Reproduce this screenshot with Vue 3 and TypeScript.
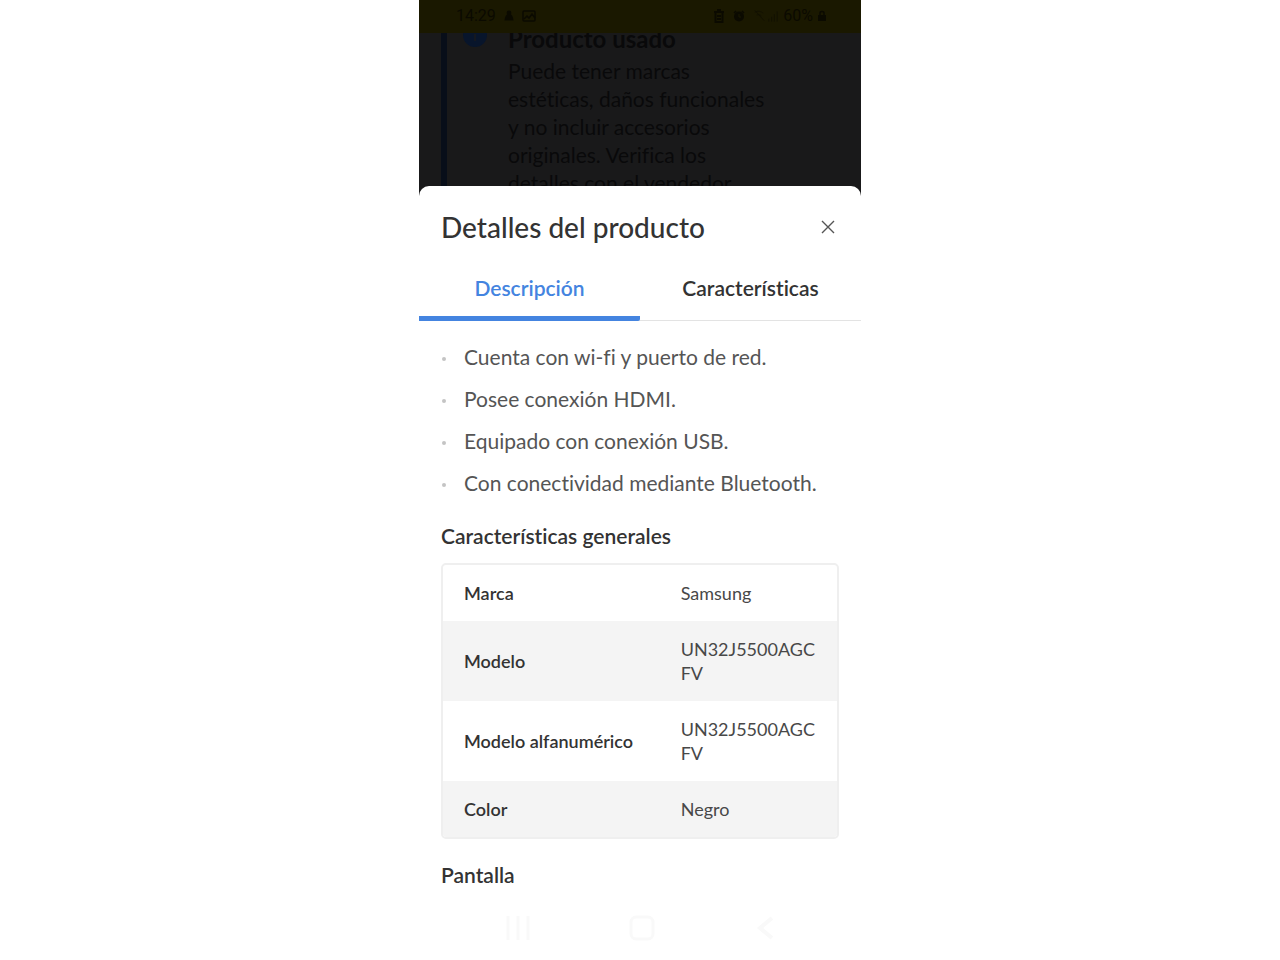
<script setup lang="ts">
import { ref } from 'vue'

interface Spec {
  name: string
  value: string
}

const tabs: string[] = ['Descripción', 'Características']
const activeTab = ref<string>('Descripción')

const features: string[] = [
  'Cuenta con wi-fi y puerto de red.',
  'Posee conexión HDMI.',
  'Equipado con conexión USB.',
  'Con conectividad mediante Bluetooth.',
]

const specs: Spec[] = [
  { name: 'Marca', value: 'Samsung' },
  { name: 'Modelo', value: 'UN32J5500AGCFV' },
  { name: 'Modelo alfanumérico', value: 'UN32J5500AGCFV' },
  { name: 'Color', value: 'Negro' },
]
</script>

<template>
  <div class="phone">
    <header class="status">
      <div class="status-group">
        <span>14:29</span>
        <svg width="10" height="12" viewBox="0 0 10 12" fill="currentColor" aria-hidden="true">
          <circle cx="5" cy="3" r="2.4" />
          <path d="M5 4c3 0 4 2.5 4.500 6.500h-9C1 6.500 2 4 5 4z" />
        </svg>
        <svg width="14" height="12" viewBox="0 0 14 12" fill="none" stroke="currentColor" stroke-width="1.500" aria-hidden="true">
          <rect x="1" y="1" width="12" height="10" rx="1" />
          <path d="M2 9l3-3 2 2 3-4 3 4" />
        </svg>
      </div>
      <div class="status-group status-right">
        <svg width="12" height="14" viewBox="0 0 12 14" fill="none" stroke="currentColor" stroke-width="2" aria-hidden="true">
          <path d="M1 3h10M4 1h4M2.500 3v10h7V3M4 7h4M4 10h4" />
        </svg>
        <svg class="alarm" width="12" height="12" viewBox="0 0 12 12" aria-hidden="true">
          <path d="M1 3l2-2M11 3L9 1" stroke="currentColor" stroke-width="1.500" />
          <circle cx="6" cy="6.500" r="5" fill="currentColor" />
          <path d="M6 4v3h2" fill="none" stroke="#1a1800" />
        </svg>
        <svg class="dim" width="26" height="14" viewBox="0 0 28 14" fill="none" stroke="currentColor" aria-hidden="true">
          <path d="M2 3c3-2 7-1 9 1M4 6c2-1 4 0 5 1M2 1l10 11M17 13v-3M20 13V8M23 13V5M26 13V2" />
        </svg>
        <span>60%</span>
        <svg width="10" height="12" viewBox="0 0 10 12" fill="currentColor" aria-hidden="true">
          <path d="M1 5h8v6H1z" />
          <path d="M3 5V3c0-2 4-2 4 0v2" fill="none" stroke="currentColor" stroke-width="1.500" />
        </svg>
      </div>
    </header>

    <section class="backdrop">
      <div class="notice">
        <svg class="info" width="24" height="24" viewBox="0 0 24 24" aria-hidden="true">
          <circle cx="12" cy="10" r="12" fill="#08152b" />
          <path d="M12 5v2M12 9v7" stroke="#141820" stroke-width="2" />
        </svg>
        <div>
          <h2>Producto usado</h2>
          <p>
            Puede tener marcas<br />estéticas, daños funcionales<br />y no incluir accesorios<br />originales.
            Verifica los<br />detalles con el vendedor
          </p>
        </div>
      </div>
    </section>

    <main class="sheet">
      <div class="sheet-head">
        <h1>Detalles del producto</h1>
        <button class="close" type="button" aria-label="Cerrar">
          <svg width="14" height="14" viewBox="0 0 14 14" fill="none" stroke="#555" stroke-width="1.400">
            <path d="M1 1l12 12M13 1L1 13" />
          </svg>
        </button>
      </div>

      <div class="tabs" role="tablist">
        <button
          v-for="tab in tabs"
          :key="tab"
          type="button"
          role="tab"
          class="tab"
          :class="{ active: tab === activeTab }"
          :aria-selected="tab === activeTab"
          @click="activeTab = tab"
        >
          {{ tab }}
        </button>
      </div>

      <div class="content">
        <ul>
          <li v-for="feature in features" :key="feature">{{ feature }}</li>
        </ul>
        <h3>Características generales</h3>
        <div class="table-frame">
          <table>
            <tbody>
              <tr v-for="spec in specs" :key="spec.name">
                <th scope="row">{{ spec.name }}</th>
                <td>{{ spec.value }}</td>
              </tr>
            </tbody>
          </table>
        </div>
        <h3>Pantalla</h3>
      </div>

      <nav class="system-nav">
        <button type="button" aria-label="Recientes">
          <svg width="26" height="26" viewBox="0 0 26 26" fill="none" stroke="#f9f9f9" stroke-width="3">
            <path d="M3 1v24M13 1v24M23 1v24" />
          </svg>
        </button>
        <button type="button" aria-label="Inicio">
          <svg width="26" height="26" viewBox="0 0 26 26" fill="none" stroke="#f9f9f9" stroke-width="3">
            <rect x="2" y="2" width="22" height="22" rx="5" />
          </svg>
        </button>
        <button type="button" aria-label="Atrás">
          <svg width="26" height="26" viewBox="0 0 26 26" fill="none" stroke="#f9f9f9" stroke-width="4">
            <path d="M19 3L7 13l12 10" />
          </svg>
        </button>
      </nav>
    </main>
  </div>
</template>

<style>
body {
  background: #fff;
}
</style>

<style scoped>
.phone {
  display: flex;
  flex-direction: column;
  box-sizing: border-box;
  max-width: 442px;
  min-height: 100vh;
  margin: 0 auto;
  background: #19191a;
  color: #333;
  font-family: Lato, 'Liberation Sans', sans-serif;
  font-variant-ligatures: none;
}

h1,
h2,
h3,
p,
ul {
  margin: 0;
  padding: 0;
}

button {
  padding: 0;
  border: 0;
  background: none;
  font: inherit;
  cursor: pointer;
}

svg {
  display: block;
}

.status {
  display: flex;
  justify-content: space-between;
  align-items: center;
  box-sizing: border-box;
  height: 33px;
  padding: 0 34px 2px 37px;
  background: #1a1800;
  color: #0b0a00;
  font: 16px Roboto, sans-serif;
}

.status-group {
  display: flex;
  align-items: center;
  gap: 8px;
}

.status-right {
  gap: 4px;
}

.alarm {
  margin: 0 4px;
}

.dim {
  opacity: 0.5;
}

.backdrop {
  height: 153px;
  overflow: hidden;
  padding-left: 22px;
  color: #09090a;
}

.notice {
  display: flex;
  gap: 21px;
  margin-top: -8px;
  padding-left: 16px;
  border-left: 6px solid #080e19;
}

.info {
  flex: none;
}

.notice h2 {
  margin-bottom: 4px;
  font-size: 24px;
  font-weight: 700;
  line-height: 28px;
}

.notice p {
  font-size: 21px;
  line-height: 28px;
}

.sheet {
  display: flex;
  flex: 1;
  flex-direction: column;
  border-radius: 10px 10px 0 0;
  background: #fff;
}

.sheet-head {
  display: flex;
  align-items: center;
  justify-content: space-between;
  padding: 24px 25px 0 22px;
}

h1 {
  font-size: 28px;
  font-weight: 500;
  line-height: 34px;
}

.close {
  padding: 1px;
}

.tabs {
  display: flex;
  margin-top: 12px;
  border-bottom: 1px solid #e3e3e3;
}

.tab {
  flex: 1;
  height: 65px;
  margin-bottom: -1px;
  padding-top: 3px;
  border-bottom: 5px solid transparent;
  color: #333;
  font-size: 21px;
  font-weight: 600;
}

.tab.active {
  border-bottom-color: #4484e0;
  border-bottom-right-radius: 2px;
  color: #4484e0;
}

.content {
  padding: 22px 22px 0;
}

ul {
  display: grid;
  gap: 14px;
  margin-bottom: 25px;
  list-style: none;
}

li {
  display: flex;
  align-items: center;
  gap: 18px;
  color: #555;
  font-size: 21px;
  line-height: 28px;
}

li::before {
  width: 4px;
  height: 4px;
  margin: 3px 0 0 1px;
  border-radius: 50%;
  background: #c4c4c4;
  content: '';
}

h3 {
  font-size: 21px;
  font-weight: 600;
  line-height: 28px;
}

.table-frame {
  margin: 13px 0 22px;
  overflow: hidden;
  border: 2px solid #efefef;
  border-radius: 5px;
}

table {
  width: 100%;
  border-collapse: collapse;
  table-layout: fixed;
  font-size: 18px;
  line-height: 24px;
}

th,
td {
  padding: 16px 21px;
  text-align: left;
  overflow-wrap: anywhere;
}

th {
  width: 55%;
  box-sizing: border-box;
  padding-right: 0;
  font-weight: 600;
}

td {
  color: #484848;
}

tr:nth-child(even) {
  background: #f4f4f4;
}

.system-nav {
  display: flex;
  justify-content: space-between;
  margin-top: auto;
  padding: 0 82px 19px 86px;
}
</style>
